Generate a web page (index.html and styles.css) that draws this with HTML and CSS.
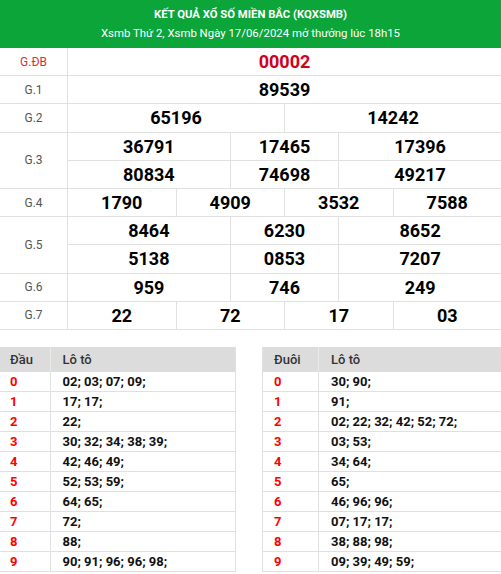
FILE: index.html
```html
<!DOCTYPE html>
<html lang="vi">
<head>
<meta charset="utf-8">
<title>KQXSMB</title>
<link rel="stylesheet" href="styles.css">
</head>
<body>
<div class="page">
  <header class="head">
    <h1 class="title">KẾT QUẢ XỔ SỐ MIỀN BẮC (KQXSMB)</h1>
    <p class="sub">Xsmb Thứ 2, Xsmb Ngày 17/06/2024 mở thưởng lúc 18h15</p>
  </header>

  <div class="results">
    <div class="lbl special">G.ĐB</div>
    <div class="num red s8">00002</div>

    <div class="lbl">G.1</div>
    <div class="num s8">89539</div>

    <div class="lbl">G.2</div>
    <div class="num s4">65196</div>
    <div class="num s4">14242</div>

    <div class="lbl r2">G.3</div>
    <div class="num s3">36791</div>
    <div class="num s2">17465</div>
    <div class="num s3">17396</div>
    <div class="num s3">80834</div>
    <div class="num s2">74698</div>
    <div class="num s3">49217</div>

    <div class="lbl">G.4</div>
    <div class="num s2">1790</div>
    <div class="num s2">4909</div>
    <div class="num s2">3532</div>
    <div class="num s2">7588</div>

    <div class="lbl r2">G.5</div>
    <div class="num s3">8464</div>
    <div class="num s2">6230</div>
    <div class="num s3">8652</div>
    <div class="num s3">5138</div>
    <div class="num s2">0853</div>
    <div class="num s3">7207</div>

    <div class="lbl">G.6</div>
    <div class="num s3">959</div>
    <div class="num s2">746</div>
    <div class="num s3">249</div>

    <div class="lbl">G.7</div>
    <div class="num s2">22</div>
    <div class="num s2">72</div>
    <div class="num s2">17</div>
    <div class="num s2">03</div>
  </div>

  <div class="loto">
    <table class="lt left">
      <thead><tr><th class="c1">Đầu</th><th>Lô tô</th></tr></thead>
      <tbody>
        <tr><td class="c1">0</td><td>02; 03; 07; 09;</td></tr>
        <tr><td class="c1">1</td><td>17; 17;</td></tr>
        <tr><td class="c1">2</td><td>22;</td></tr>
        <tr><td class="c1">3</td><td>30; 32; 34; 38; 39;</td></tr>
        <tr><td class="c1">4</td><td>42; 46; 49;</td></tr>
        <tr><td class="c1">5</td><td>52; 53; 59;</td></tr>
        <tr><td class="c1">6</td><td>64; 65;</td></tr>
        <tr><td class="c1">7</td><td>72;</td></tr>
        <tr><td class="c1">8</td><td>88;</td></tr>
        <tr><td class="c1">9</td><td>90; 91; 96; 96; 98;</td></tr>
      </tbody>
    </table>
    <table class="lt right">
      <thead><tr><th class="c1">Đuôi</th><th>Lô tô</th></tr></thead>
      <tbody>
        <tr><td class="c1">0</td><td>30; 90;</td></tr>
        <tr><td class="c1">1</td><td>91;</td></tr>
        <tr><td class="c1">2</td><td>02; 22; 32; 42; 52; 72;</td></tr>
        <tr><td class="c1">3</td><td>03; 53;</td></tr>
        <tr><td class="c1">4</td><td>34; 64;</td></tr>
        <tr><td class="c1">5</td><td>65;</td></tr>
        <tr><td class="c1">6</td><td>46; 96; 96;</td></tr>
        <tr><td class="c1">7</td><td>07; 17; 17;</td></tr>
        <tr><td class="c1">8</td><td>38; 88; 98;</td></tr>
        <tr><td class="c1">9</td><td>09; 39; 49; 59;</td></tr>
      </tbody>
    </table>
  </div>
</div>
</body>
</html>
```

FILE: styles.css
```css
* { box-sizing: border-box; }
html, body { margin: 0; padding: 0; background: #fff; }
body { font-family: Roboto, "Liberation Sans", Arial, sans-serif; color: #111; }

.page { width: 501px; }

.head {
  background: #0ba53a;
  color: #fff;
  height: 48px;
  padding-top: 7px;
  text-align: center;
}
.title {
  margin: 0;
  font-size: 11.3px;
  font-weight: 700;
  line-height: 16px;
}
.sub {
  margin: 1px 0 0;
  font-size: 11.4px;
  line-height: 18px;
}

.results {
  display: grid;
  grid-template-columns: 67px repeat(8, 1fr);
  grid-auto-rows: 27.2px;
  gap: 1px;
  background: #e0e0e0;
  padding-bottom: 1px;
}
.lbl {
  background: #fff;
  display: flex;
  align-items: center;
  justify-content: center;
  font-size: 12px;
  color: #555;
}
.lbl.special { color: #d9303a; }
.lbl.r2 { grid-row: span 2; }
.num {
  background: #fff;
  display: flex;
  align-items: center;
  justify-content: center;
  font-size: 18px;
  font-weight: 700;
  color: #000;
}
.num.red { color: #d0021b; }
.s8 { grid-column: span 8; }
.s4 { grid-column: span 4; }
.s3 { grid-column: span 3; }
.s2 { grid-column: span 2; }

.loto {
  display: grid;
  grid-template-columns: 236px 239px;
  column-gap: 26px;
  margin-top: 17px;
  align-items: start;
}
.lt {
  border-collapse: collapse;
  width: 100%;
  font-size: 13px;
}
.lt.left { border-right: 1px solid #e0e0e0; }
.lt.right { border-left: 1px solid #e0e0e0; }
.lt th {
  background: #dcdcdc;
  height: 25px;
  text-align: left;
  font-weight: 500;
  color: #333;
  padding: 0 0 0 12px;
}
.lt td {
  height: 20px;
  padding: 0 0 0 12px;
  font-weight: 700;
  color: #111;
  border-bottom: 1px solid #e0e0e0;
}
.lt .c1 { border-right: 1px solid #e0e0e0; }
.lt th.c1 { border-right: 1px solid #eaeaea; }
.lt td.c1 { color: #f00; }
.lt.left .c1 { width: 50px; padding-left: 10px; }
.lt.right .c1 { width: 56px; padding-left: 11px; }
```
